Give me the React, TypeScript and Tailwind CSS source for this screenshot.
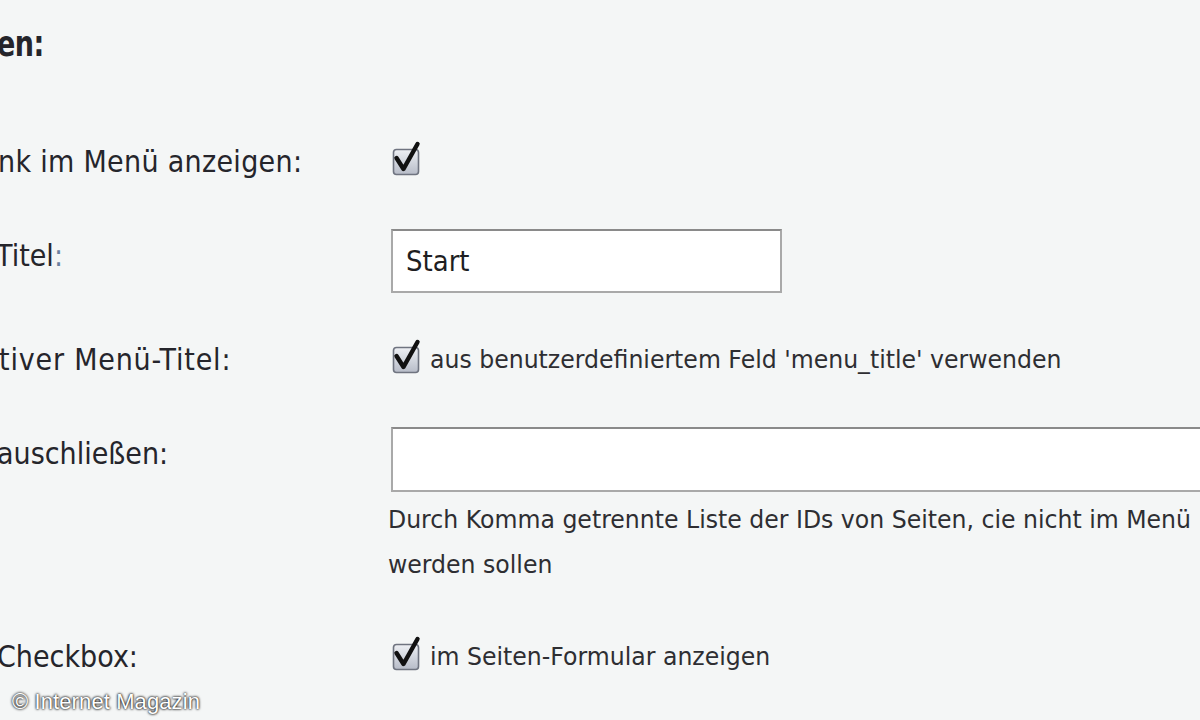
import React from "react";

function Check() {
  return (
    <svg width="30" height="36" viewBox="0 0 30 36" className="shrink-0">
      <defs>
        <linearGradient id="cbg" x1="0" y1="0" x2="0" y2="1">
          <stop offset="0" stopColor="#eef0f4" />
          <stop offset="0.5" stopColor="#d2d6de" />
          <stop offset="1" stopColor="#b7bcc8" />
        </linearGradient>
      </defs>
      <rect x="1.5" y="8.5" width="25" height="25" rx="3" fill="url(#cbg)" stroke="#6f7480" strokeWidth="1.6" />
      <path d="M4.5 17 L11.5 28 L25.5 3" fill="none" stroke="#111" strokeWidth="4.4" strokeLinecap="round" strokeLinejoin="round" />
    </svg>
  );
}

export default function App() {
  const font = { fontFamily: '"DejaVu Sans", Verdana, sans-serif' };
  return (
    <div
      className="relative w-[1200px] h-[720px] overflow-hidden bg-[#f4f6f6] text-[#25252b]"
      style={font}
    >
      <div className="flex flex-col">
        <div className="h-[130px] pt-[18px]">
          <div className="text-[27px] font-bold leading-[40px] -ml-[3px] origin-top-left scale-y-[1.3] tracking-[-0.5px]">en:</div>
        </div>

        <div className="flex h-[64px] items-center">
          <div className="w-[391px] shrink-0 text-[27px]">
            <span className="block -ml-[2px] tracking-[0.3px] scale-y-[1.1]">nk im Menü anzeigen:</span>
          </div>
          <div className="flex items-center pl-[1px] -mt-[6px]">
            <Check />
          </div>
        </div>

        <div className="mt-[35px] flex h-[64px] items-center">
          <div className="w-[391px] shrink-0 text-[27px]">
            <span className="block -ml-[4px] -mt-[10px] scale-y-[1.1] origin-left">
              Titel<span className="text-[#6a7fa0]">:</span>
            </span>
          </div>
          <div className="h-[64px] w-[391px] shrink-0 bg-white border-2 border-[#a9a9a9] border-t-[#8a8a8a] flex items-center px-[13px] text-[26px] text-[#1e1e22]">
            <span className="scale-y-[1.1]">Start</span>
          </div>
        </div>

        <div className="mt-[35px] flex h-[64px] items-center">
          <div className="w-[391px] shrink-0 text-[27px]">
            <span className="block -ml-[1px] tracking-[0.8px] scale-y-[1.1] origin-left">tiver Menü-Titel:</span>
          </div>
          <div className="flex items-center gap-[8px] pl-[1px]">
            <div className="-mt-[6px]">
              <Check />
            </div>
            <span className="text-[23.6px] text-[#2e2e32] whitespace-nowrap scale-y-[1.08]">aus benutzerdefiniertem Feld 'menu_title' verwenden</span>
          </div>
        </div>

        <div className="mt-[35px] flex items-start">
          <div className="w-[391px] shrink-0 text-[27px] pt-[7px]">
            <span className="block -ml-[3px] scale-y-[1.1] origin-left">auschließen:</span>
          </div>
          <div className="flex flex-col">
            <div className="h-[65px] w-[830px] shrink-0 bg-white border-2 border-[#a9a9a9] border-t-[#8a8a8a]"></div>
            <div className="mt-[5px] -ml-[3px] text-[23.6px] leading-[45px] text-[#2e2e32] whitespace-nowrap">
              <span className="inline-block scale-y-[1.08]">Durch Komma getrennte Liste der IDs von Seiten, cie nicht im Menü</span>
            </div>
            <div className="-ml-[3px] text-[23.6px] leading-[45px] text-[#2e2e32]">
              <span className="inline-block scale-y-[1.08]">werden sollen</span>
            </div>
          </div>
        </div>

        <div className="mt-[38px] flex h-[64px] items-center">
          <div className="w-[391px] shrink-0 text-[27px]">
            <span className="block -ml-[3px] scale-y-[1.1] origin-left">Checkbox:</span>
          </div>
          <div className="flex items-center gap-[8px] pl-[1px]">
            <div className="-mt-[6px]">
              <Check />
            </div>
            <span className="text-[23.6px] text-[#2e2e32] scale-y-[1.08]">im Seiten-Formular anzeigen</span>
          </div>
        </div>
      </div>

      <div
        className="absolute left-[12px] top-[685px] text-[22px] text-white tracking-[0.1px]"
        style={{ fontFamily: '"Liberation Sans", Arial, sans-serif', textShadow: "0 0 3px #000, 0 0 2px #222" }}
      >
        © Internet Magazin
      </div>
    </div>
  );
}
